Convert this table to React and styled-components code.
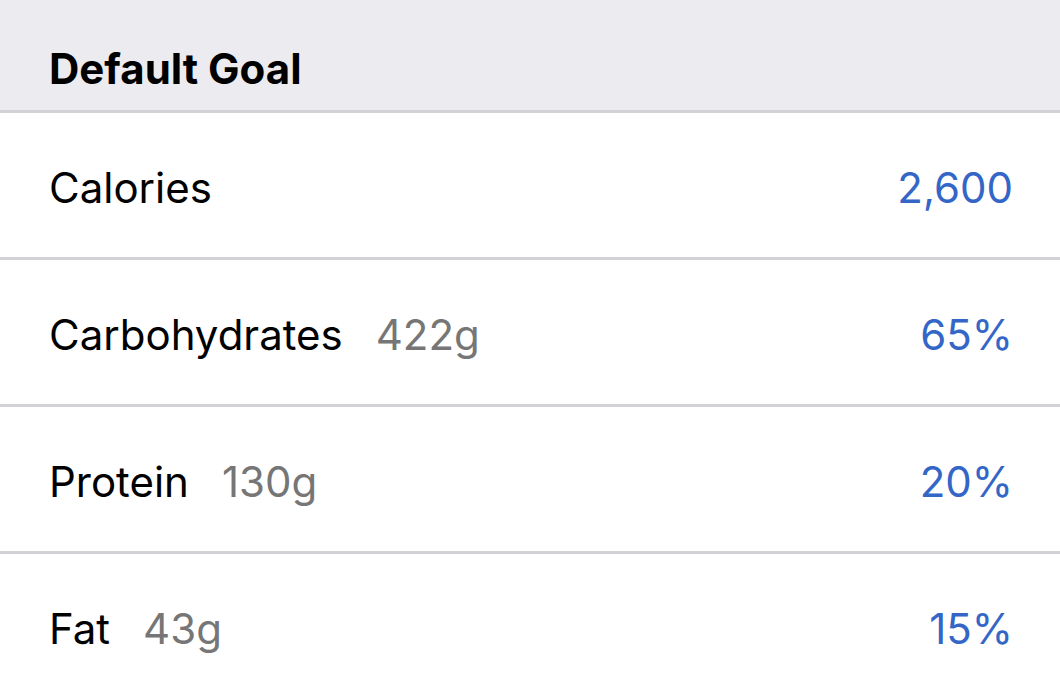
import React from "react";
import styled, { createGlobalStyle } from "styled-components";

const GlobalStyle = createGlobalStyle`
	html, body {
		margin: 0;
		padding: 0;
		background: #ffffff;
	}
	body {
		font-family: Inter, "Noto Sans", sans-serif;
	}
`;

const Page = styled.div`
	width: 1060px;
	height: 698px;
	overflow: hidden;
	background: #ffffff;
`;

const Header = styled.div`
	height: 113px;
	display: flex;
	align-items: flex-end;
	padding: 0 49px 20px;
	box-sizing: border-box;
	background: #ebebf0;
	border-bottom: 3px solid #d1d1d6;
`;

const Title = styled.h2`
	margin: 0;
	font-size: 42px;
	font-weight: 700;
	color: #000000;
	line-height: 1;
`;

const Row = styled.div`
	height: 140px;
	display: flex;
	align-items: center;
	justify-content: space-between;
	padding: 4px 47px 0 49px;
	border-bottom: ${(p) => (p.last ? "none" : "3px solid #d1d1d6")};
`;

const Label = styled.div`
	display: flex;
	align-items: baseline;
	gap: 33px;
	font-size: 42px;
	color: #000000;
`;

const Grams = styled.span`
	color: #767676;
`;

const Value = styled.span`
	font-size: 42px;
	color: #3466c8;
`;

const rows = [
	{ name: "Calories", value: "2,600" },
	{ name: "Carbohydrates", grams: "422g", value: "65%" },
	{ name: "Protein", grams: "130g", value: "20%" },
	{ name: "Fat", grams: "43g", value: "15%" },
];

const App = () => {
	return (
		<Page>
			<GlobalStyle />
			<Header>
				<Title>Default Goal</Title>
			</Header>
			{rows.map((r, i) => (
				<Row key={r.name} last={i === rows.length - 1}>
					<Label>
						{r.name}
						{r.grams && <Grams>{r.grams}</Grams>}
					</Label>
					<Value>{r.value}</Value>
				</Row>
			))}
		</Page>
	);
};

export default App;
